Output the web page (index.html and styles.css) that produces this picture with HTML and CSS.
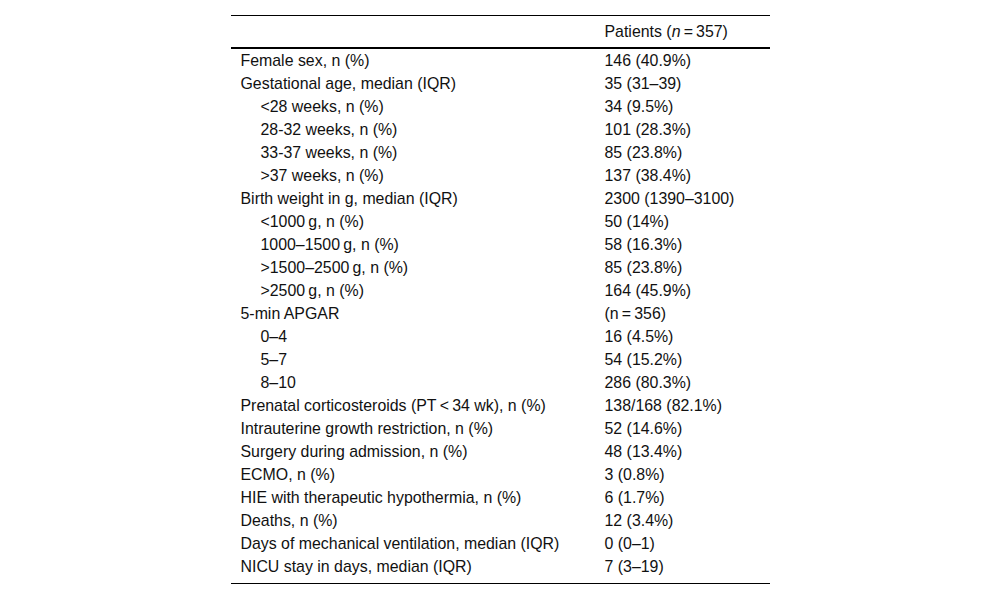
FILE: index.html
```html
<!DOCTYPE html>
<html lang="en">
<head>
    <meta charset="UTF-8">
    <title>Patient characteristics</title>
    <link rel="stylesheet" href="styles.css">
</head>
<body>

<table class="data-table">
    <thead>
        <tr>
            <th class="col-label"></th>
            <th class="col-value">Patients (<i>n</i>&#8201;=&#8201;357)</th>
        </tr>
    </thead>
    <tbody>
        <tr><td>Female sex, n (%)</td><td>146 (40.9%)</td></tr>
        <tr><td>Gestational age, median (IQR)</td><td>35 (31–39)</td></tr>
        <tr><td class="sub">&lt;28 weeks, n (%)</td><td>34 (9.5%)</td></tr>
        <tr><td class="sub">28-32 weeks, n (%)</td><td>101 (28.3%)</td></tr>
        <tr><td class="sub">33-37 weeks, n (%)</td><td>85 (23.8%)</td></tr>
        <tr><td class="sub">&gt;37 weeks, n (%)</td><td>137 (38.4%)</td></tr>
        <tr><td>Birth weight in g, median (IQR)</td><td>2300 (1390–3100)</td></tr>
        <tr><td class="sub">&lt;1000&#8201;g, n (%)</td><td>50 (14%)</td></tr>
        <tr><td class="sub">1000–1500&#8201;g, n (%)</td><td>58 (16.3%)</td></tr>
        <tr><td class="sub">&gt;1500–2500&#8201;g, n (%)</td><td>85 (23.8%)</td></tr>
        <tr><td class="sub">&gt;2500&#8201;g, n (%)</td><td>164 (45.9%)</td></tr>
        <tr><td>5-min APGAR</td><td>(n&#8201;=&#8201;356)</td></tr>
        <tr><td class="sub">0–4</td><td>16 (4.5%)</td></tr>
        <tr><td class="sub">5–7</td><td>54 (15.2%)</td></tr>
        <tr><td class="sub">8–10</td><td>286 (80.3%)</td></tr>
        <tr><td>Prenatal corticosteroids (PT&#8201;&lt;&#8201;34 wk), n (%)</td><td>138/168 (82.1%)</td></tr>
        <tr><td>Intrauterine growth restriction, n (%)</td><td>52 (14.6%)</td></tr>
        <tr><td>Surgery during admission, n (%)</td><td>48 (13.4%)</td></tr>
        <tr><td>ECMO, n (%)</td><td>3 (0.8%)</td></tr>
        <tr><td>HIE with therapeutic hypothermia, n (%)</td><td>6 (1.7%)</td></tr>
        <tr><td>Deaths, n (%)</td><td>12 (3.4%)</td></tr>
        <tr><td>Days of mechanical ventilation, median (IQR)</td><td>0 (0–1)</td></tr>
        <tr class="last"><td>NICU stay in days, median (IQR)</td><td>7 (3–19)</td></tr>
    </tbody>
</table>

</body>
</html>
```

FILE: styles.css
```css
body { margin: 0; background: #fff; color: #111; font-family: 'Liberation Sans', Arial, sans-serif; font-size: 15.9px; }
.data-table { width: 539px; margin: 15px auto 0; border-collapse: collapse; border-top: 1px solid #000; border-bottom: 1px solid #000; }
.data-table th { font-weight: normal; text-align: left; line-height: 23px; padding: 4px 10px; border-bottom: 2px solid #000; }
.data-table td { line-height: 23px; padding: 0 10px; text-align: left; white-space: nowrap; }
.col-label { width: 344px; }
.col-value { width: 155px; }
.data-table td.sub { padding-left: 30px; }
.data-table tr.last td { padding-bottom: 5px; }
```
